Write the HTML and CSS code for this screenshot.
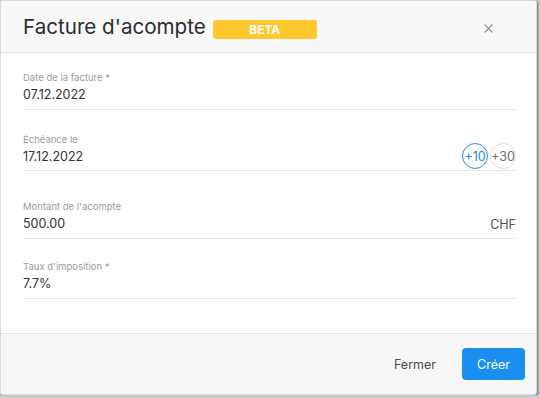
FILE: index.html
```html
<!doctype html>
<html lang="fr">
  <head>
    <meta charset="UTF-8" />
    <meta name="viewport" content="width=device-width, initial-scale=1.0" />
    <title>Facture d'acompte</title>
    <link rel="stylesheet" href="styles.css">
  </head>
  <body>
    <div class="dialog">
      <header class="dialog-header">
        <h1>Facture d'acompte</h1>
        <span class="badge">BETA</span>
        <button class="close" aria-label="Fermer">
          <svg width="9" height="9" viewBox="0 0 9 9"><path d="M0.5 0.5L8.5 8.5M8.5 0.5L0.5 8.5" stroke="#8a8d92" stroke-width="1.1" fill="none"/></svg>
        </button>
      </header>

      <div class="dialog-body">
        <div class="field">
          <label>Date de la facture *</label>
          <div class="field-row">
            <span class="value">07.12.2022</span>
          </div>
        </div>

        <div class="field field-due">
          <label>Échéance le</label>
          <div class="field-row">
            <span class="value">17.12.2022</span>
            <div class="chips">
              <span class="chip chip-active">+10</span>
              <span class="chip">+30</span>
            </div>
          </div>
        </div>

        <div class="field field-amount">
          <label>Montant de l'acompte</label>
          <div class="field-row">
            <span class="value">500.00</span>
            <span class="suffix">CHF</span>
          </div>
        </div>

        <div class="field field-tax">
          <label>Taux d'imposition *</label>
          <div class="field-row">
            <span class="value">7.7%</span>
          </div>
        </div>
      </div>

      <footer class="dialog-footer">
        <button class="btn btn-link">Fermer</button>
        <button class="btn btn-primary">Créer</button>
      </footer>
    </div>
  </body>
</html>
```

FILE: styles.css
```css
body {
  margin: 0;
  padding: 0;
  font-family: Inter, "Liberation Sans", Arial, sans-serif;
  background-color: #c9cbcf;
}

.dialog {
  width: 537px;
  height: 395px;
  box-sizing: border-box;
  display: flex;
  flex-direction: column;
  background-color: #ffffff;
  border: 1px solid #d7dade;
  border-radius: 3px;
  box-shadow: 1px 1px 2px rgba(0, 0, 0, 0.45);
  overflow: hidden;
}

/* Header */
.dialog-header {
  height: 49px;
  display: flex;
  align-items: center;
  padding: 2px 22px 0 22px;
  background-color: #f8f8f9;
  border-bottom: 1px solid #e1e3e6;
}

.dialog-header h1 {
  margin: 0;
  font-size: 20.6px;
  font-weight: 400;
  line-height: 1;
  color: #2b2d31;
}

.badge {
  margin-left: 7px;
  margin-top: 3px;
  width: 104px;
  height: 19px;
  line-height: 19px;
  text-align: center;
  border-radius: 3px;
  background-color: #ffc82e;
  color: #ffffff;
  font-size: 12px;
  font-weight: 700;
}

.close {
  margin-left: auto;
  margin-right: 21px;
  margin-top: 2px;
  padding: 0;
  border: 0;
  background: none;
  display: flex;
}

/* Body */
.dialog-body {
  flex: 1;
  padding: 19px 20px 0 22px;
}

.field {
  border-bottom: 1px solid #e4e5e7;
  padding-bottom: 6px;
}

.field label {
  display: block;
  font-size: 9.5px;
  line-height: 12px;
  color: #9a9ca0;
  margin-bottom: 3px;
}

.field-row {
  display: flex;
  align-items: center;
  height: 16px;
}

.value {
  font-size: 12.5px;
  line-height: 16px;
  color: #303236;
}

.suffix {
  margin-left: auto;
  font-size: 12.5px;
  color: #505357;
}

.field-due {
  margin-top: 24px;
  padding-bottom: 5px;
}

.field-amount {
  margin-top: 30px;
}

.field-tax {
  margin-top: 22px;
}

.chips {
  margin-left: auto;
  display: flex;
  gap: 2px;
}

.chip {
  width: 24px;
  height: 24px;
  margin: -6px 0 -4px;
  border-radius: 50%;
  border: 1px solid #dddfe2;
  display: flex;
  align-items: center;
  justify-content: center;
  font-size: 12.5px;
  color: #6b6e73;
}

.chip-active {
  border-color: #2a8be4;
  color: #2a8be4;
}

/* Footer */
.dialog-footer {
  height: 60px;
  display: flex;
  align-items: center;
  justify-content: flex-end;
  gap: 14px;
  padding: 0 11px;
  background-color: #f7f7f7;
  border-top: 1px solid #e1e3e6;
}

.btn {
  font-family: inherit;
  font-size: 12.5px;
  border: 0;
  border-radius: 4px;
  height: 32px;
  cursor: pointer;
}

.btn-link {
  background: none;
  color: #4a4d52;
  padding: 0 12px;
}

.btn-primary {
  width: 63px;
  background-color: #1a8ff0;
  color: #ffffff;
}
```
